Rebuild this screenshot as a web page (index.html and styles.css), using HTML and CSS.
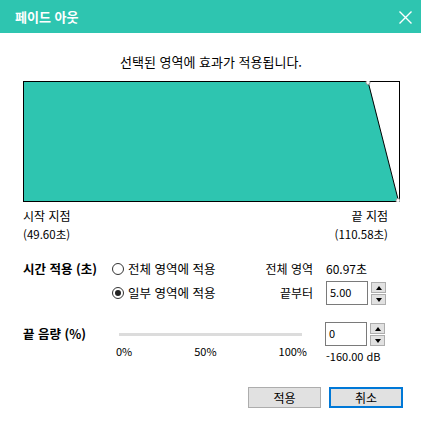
FILE: index.html
```html
<!DOCTYPE html>
<html lang="ko">
<head>
<meta charset="utf-8">
<link rel="stylesheet" href="styles.css">
</head>
<body>
<div class="titlebar">
  <span class="title">페이드 아웃</span>
  <svg class="close" width="13" height="13" viewBox="0 0 13 13"><path d="M0.5 0.5 L12.5 12.5 M12.5 0.5 L0.5 12.5" stroke="#fff" stroke-width="1.4" fill="none"/></svg>
</div>
<div class="main">
  <div class="heading">선택된 영역에 효과가 적용됩니다.</div>
  <svg class="chart" width="377" height="121" viewBox="0 0 377 121">
    <rect x="0.5" y="0.5" width="376" height="120" fill="#fff" stroke="#000" stroke-width="1"/>
    <polygon points="0,0 345,0 375.5,120.5 0,121" fill="#2ec5b0"/>
    <rect x="0.5" y="0.5" width="376" height="120" fill="none" stroke="#000" stroke-width="1"/>
    <line x1="345" y1="0.5" x2="375.5" y2="120" stroke="#000" stroke-width="1"/>
    <circle cx="345" cy="1.5" r="2" fill="#fff" stroke="#999" stroke-width="1"/>
    <circle cx="375" cy="119.5" r="2" fill="#fff" stroke="#999" stroke-width="1"/>
  </svg>
  <div class="points">
    <div class="point">
      <div class="pname">시작 지점</div>
      <div>(49.60초)</div>
    </div>
    <div class="point point-end">
      <div class="pname">끝 지점</div>
      <div>(110.58초)</div>
    </div>
  </div>
  <div class="settings">
    <div class="label bold">시간 적용 (초)</div>
    <div class="radio"><span class="dot"></span>전체 영역에 적용</div>
    <div class="rlabel">전체 영역</div>
    <div class="value">60.97초</div>

    <div></div>
    <div class="radio"><span class="dot checked"></span>일부 영역에 적용</div>
    <div class="rlabel">끝부터</div>
    <div class="spin">
      <div class="box">5.00</div>
      <div class="arrows">
        <div class="arrow"><span class="tri up"></span></div>
        <div class="arrow"><span class="tri down"></span></div>
      </div>
    </div>

    <div class="label bold vol">끝 음량 (%)</div>
    <div class="slider">
      <div class="track"></div>
      <div class="ticks"><span>0%</span><span>50%</span><span>100%</span></div>
    </div>
    <div class="volbox">
      <div class="spin">
        <div class="box">0</div>
        <div class="arrows">
          <div class="arrow"><span class="tri up"></span></div>
          <div class="arrow"><span class="tri down"></span></div>
        </div>
      </div>
      <div class="db">-160.00 dB</div>
    </div>
  </div>
  <div class="buttons">
    <button class="btn">적용</button>
    <button class="btn primary">취소</button>
  </div>
</div>
</body>
</html>
```
FILE: styles.css
```css
html, body {
  margin: 0;
  padding: 0;
}
body {
  width: 421px;
  height: 424px;
  overflow: hidden;
  background: #fff;
  color: #000;
  font-family: "Noto Sans CJK KR", "Noto Sans", sans-serif;
  font-size: 12px;
}
.titlebar {
  height: 33px;
  background: #2ec5b0;
  display: flex;
  align-items: center;
  justify-content: space-between;
  padding: 0 9px 0 15px;
  color: #fff;
}
.title {
  font-size: 13px;
  font-weight: bold;
  line-height: 16px;
}
.close {
  display: block;
  margin-top: 1px;
}
.main {
  padding: 0 22px 0 23px;
}
.heading {
  margin-top: 19px;
  text-align: center;
  font-size: 13px;
  line-height: 20px;
}
.chart {
  display: block;
  margin-top: 9px;
}
.points {
  display: flex;
  justify-content: space-between;
  margin-top: 5px;
  padding-right: 11px;
  font-size: 11.5px;
  line-height: 18px;
}
.pname {
  font-size: 12px;
}
.point-end {
  text-align: right;
}
.settings {
  margin-top: 14px;
  display: grid;
  grid-template-columns: 89px 150px 51px auto;
  grid-template-rows: 24px 24px auto;
  column-gap: 0;
  align-items: center;
}
.bold {
  font-weight: bold;
}
.label {
  line-height: 16px;
  font-size: 12.5px;
}
.radio {
  display: flex;
  align-items: center;
  line-height: 16px;
  font-size: 12.5px;
}
.dot {
  box-sizing: border-box;
  width: 12px;
  height: 12px;
  border: 1px solid #333;
  border-radius: 50%;
  margin-right: 4px;
  display: flex;
  align-items: center;
  justify-content: center;
  background: #fff;
}
.dot.checked::after {
  content: "";
  width: 6px;
  height: 6px;
  border-radius: 50%;
  background: #222;
}
.rlabel {
  justify-self: end;
  line-height: 16px;
}
.value {
  margin-left: 13px;
  line-height: 16px;
}
.spin {
  display: flex;
  align-items: flex-start;
  margin-left: 13px;
}
.box {
  box-sizing: border-box;
  width: 42px;
  height: 24px;
  border: 1px solid #7a7a7a;
  padding: 2px 0 0 3px;
  line-height: 17px;
  font-size: 11px;
  background: #fff;
}
.arrows {
  margin-left: 3px;
  display: flex;
  flex-direction: column;
  gap: 1px;
  padding-top: 1px;
}
.arrow {
  box-sizing: border-box;
  width: 15px;
  height: 11px;
  border: 1px solid #adadad;
  background: #e1e1e1;
  display: flex;
  align-items: center;
  justify-content: center;
}
.tri {
  width: 0;
  height: 0;
  border-left: 3.5px solid transparent;
  border-right: 3.5px solid transparent;
}
.tri.up {
  border-bottom: 4px solid #000;
}
.tri.down {
  border-top: 4px solid #000;
}
.vol {
  align-self: start;
  margin-top: 17px;
  line-height: 23px;
}
.slider {
  grid-column: 2 / span 2;
  align-self: start;
  margin-top: 28px;
}
.track {
  margin-left: 7px;
  width: 183px;
  height: 3px;
  background: #dcdcdc;
}
.ticks {
  display: flex;
  justify-content: space-between;
  margin-left: 4px;
  width: 191px;
  margin-top: 7px;
  font-size: 11px;
  line-height: 16px;
}
.volbox {
  align-self: start;
  margin-top: 17px;
  margin-left: -1px;
}
.db {
  margin-left: 14px;
  margin-top: 2px;
  font-size: 11px;
  line-height: 16px;
}
.buttons {
  display: flex;
  justify-content: flex-end;
  gap: 8px;
  margin-top: 23px;
  margin-right: -4px;
}
.btn {
  box-sizing: border-box;
  width: 73px;
  height: 21px;
  margin: 0;
  padding: 0;
  border: 1px solid #adadad;
  background: #e1e1e1;
  font-family: inherit;
  font-size: 12px;
  line-height: 17px;
  color: #000;
}
.btn.primary {
  width: 74px;
  border: 2px solid #0078d7;
}
```
